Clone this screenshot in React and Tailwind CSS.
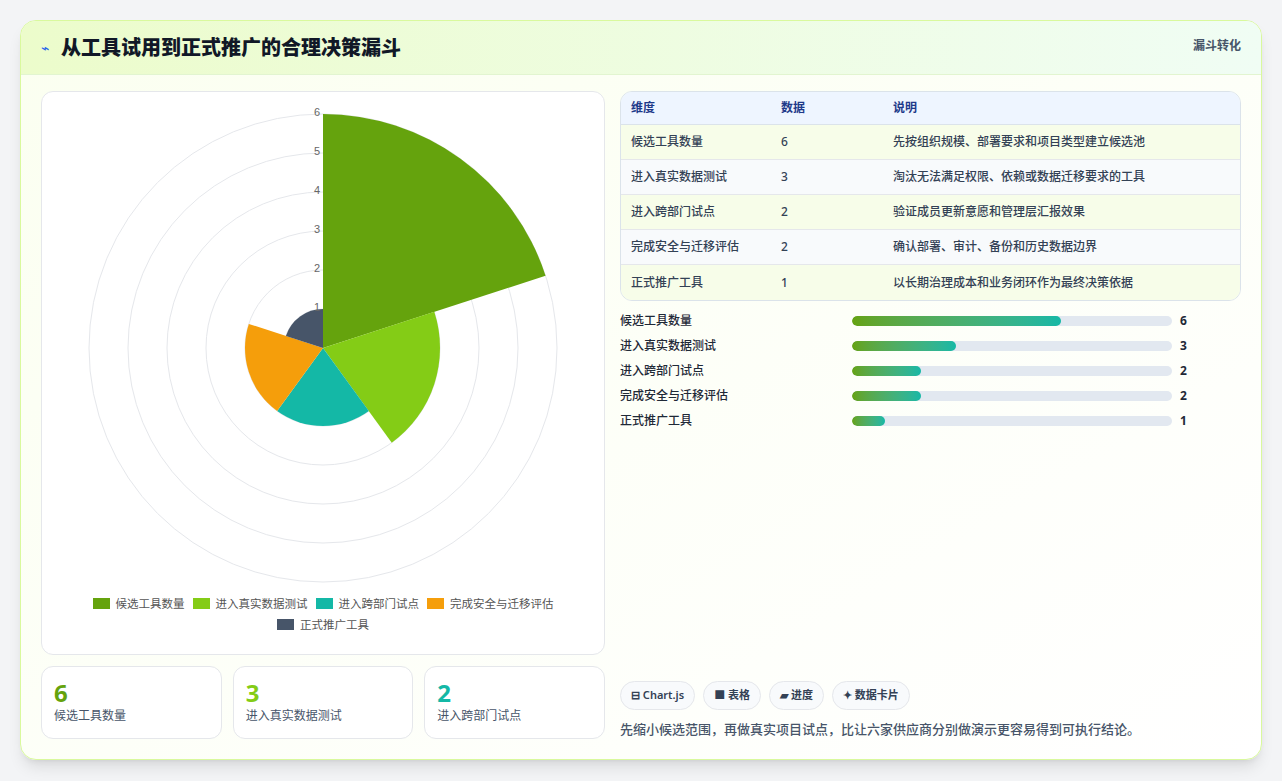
import React from "react";

const rows = [
  ["候选工具数量", 6, "先按组织规模、部署要求和项目类型建立候选池", "#65a30d"],
  ["进入真实数据测试", 3, "淘汰无法满足权限、依赖或数据迁移要求的工具", "#84cc16"],
  ["进入跨部门试点", 2, "验证成员更新意愿和管理层汇报效果", "#14b8a6"],
  ["完成安全与迁移评估", 2, "确认部署、审计、备份和历史数据边界", "#f59e0b"],
  ["正式推广工具", 1, "以长期治理成本和业务闭环作为最终决策依据", "#475569"],
];

function Polar() {
  const cx = 281, cy = 253, u = 39;
  const seg = (i, v) => {
    const r = v * u;
    const a0 = (-90 + i * 72) * Math.PI / 180;
    const a1 = (-90 + (i + 1) * 72) * Math.PI / 180;
    const x0 = cx + r * Math.cos(a0), y0 = cy + r * Math.sin(a0);
    const x1 = cx + r * Math.cos(a1), y1 = cy + r * Math.sin(a1);
    return `M${cx},${cy} L${x0},${y0} A${r},${r} 0 0 1 ${x1},${y1} Z`;
  };
  return (
    <svg width="562" height="498" viewBox="0 0 562 498">
      {[1, 2, 3, 4, 5, 6].map((k) => (
        <circle key={k} cx={cx} cy={cy} r={k * u} fill="none" stroke="#e5e7eb" strokeWidth="1" />
      ))}
      {rows.map((r, i) => (
        <path key={i} d={seg(i, r[1])} fill={r[3]} />
      ))}
      {[1, 2, 3, 4, 5, 6].map((k) => (
        <text key={k} x={cx - 3} y={cy - k * u + 2} fontSize="11" fill="#666" textAnchor="end" fontFamily="Liberation Sans, sans-serif">{k}</text>
      ))}
    </svg>
  );
}

export default function App() {
  const font = { fontFamily: '"Noto Sans", "Noto Sans CJK SC", sans-serif' };
  return (
    <div className="w-[1282px] h-[781px] bg-[#f3f4f6] p-5" style={font}>
      <div className="h-[740px] rounded-2xl border border-[#d9f99d] bg-gradient-to-br from-[#fbfff0] to-white shadow-lg overflow-hidden flex flex-col">
        <div className="h-[56px] flex items-start justify-between px-5 pt-3 bg-gradient-to-r from-[#ecfccb] to-[#f0fdf4] border-b border-[#e2f5d0]">
          <div className="flex items-center gap-3">
            <span className="text-[#2563eb] text-sm">⌁</span>
            <span className="text-[20px] font-extrabold text-[#111827]">从工具试用到正式推广的合理决策漏斗</span>
          </div>
          <span className="text-[12px] font-bold text-[#475569] mt-1">漏斗转化</span>
        </div>
        <div className="flex-1 flex gap-[15px] px-5 pt-4 pb-5">
          <div className="w-[564px] flex flex-col gap-[11px]">
            <div className="h-[564px] rounded-xl border border-[#e5e7eb] bg-white flex flex-col items-center">
              <div className="mt-[3px]"><Polar /></div>
              <div className="flex flex-wrap justify-center gap-x-2 gap-y-1 px-6 text-[11.5px] text-[#555] mt-[2px]">
                {rows.map((r) => (
                  <div key={r[0]} className="flex items-center gap-1.5">
                    <span className="w-[17px] h-[11px]" style={{ background: r[3] }} />
                    {r[0]}
                  </div>
                ))}
              </div>
            </div>
            <div className="flex gap-[11px]">
              {rows.slice(0, 3).map((r) => (
                <div key={r[0]} className="flex-1 h-[73px] rounded-xl border border-[#e5e7eb] bg-white px-3 pt-3">
                  <div className="text-[24px] font-bold leading-7" style={{ color: r[3] }}>{r[1]}</div>
                  <div className="text-[12px] text-[#475569]">{r[0]}</div>
                </div>
              ))}
            </div>
          </div>
          <div className="flex-1 flex flex-col">
            <div className="rounded-xl border border-[#dbe3ea] overflow-hidden text-[12px]">
              <div className="flex h-[33px] items-center bg-[#eef5ff] text-[#1e3a8a] font-semibold border-b border-[#dbe3ea]">
                <div className="w-[160px] pl-2.5">维度</div>
                <div className="w-[112px]">数据</div>
                <div className="flex-1">说明</div>
              </div>
              {rows.map((r, i) => (
                <div key={r[0]} className={`flex h-[35px] items-center text-[#334155] font-medium ${i % 2 ? "bg-[#f8fafc]" : "bg-[#f7fde9]"} ${i < 4 ? "border-b border-[#e5e7eb]" : ""}`}>
                  <div className="w-[160px] pl-2.5">{r[0]}</div>
                  <div className="w-[112px]">{r[1]}</div>
                  <div className="flex-1">{r[2]}</div>
                </div>
              ))}
            </div>
            <div className="flex flex-col gap-[13px] mt-[14px] text-[12px] font-medium">
              {rows.map((r) => (
                <div key={r[0]} className="flex items-center h-[12px]">
                  <div className="w-[232px] text-[#1f2937]">{r[0]}</div>
                  <div className="w-[320px] h-[10px] rounded-full bg-[#e2e8f0] overflow-hidden">
                    <div className="h-full rounded-full bg-gradient-to-r from-[#65a30d] to-[#14b8a6]" style={{ width: `${({6:209,3:104,2:69,1:33})[r[1]]}px` }} />
                  </div>
                  <div className="ml-2 font-bold text-[#1f2937]">{r[1]}</div>
                </div>
              ))}
            </div>
            <div className="mt-auto">
              <div className="flex gap-2 mb-[10px]">
                {["⊟ Chart.js", "■ 表格", "▰ 进度", "✦ 数据卡片"].map((t) => (
                  <span key={t} className="h-[29px] px-2.5 flex items-center rounded-full border border-[#e5e7eb] bg-[#f8fafc] text-[11px] font-semibold text-[#334155]">{t}</span>
                ))}
              </div>
              <div className="text-[13px] text-[#475569] font-medium">先缩小候选范围，再做真实项目试点，比让六家供应商分别做演示更容易得到可执行结论。</div>
            </div>
          </div>
        </div>
      </div>
    </div>
  );
}
